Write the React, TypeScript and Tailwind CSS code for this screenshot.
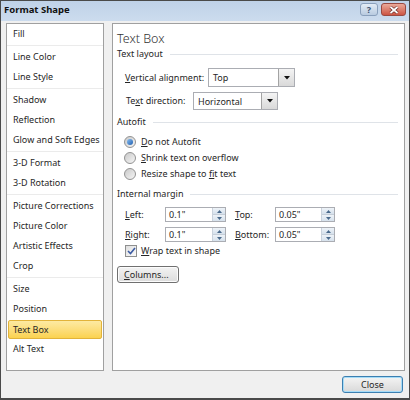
import React from "react";

const groups: string[][] = [
  ["Fill"],
  ["Line Color", "Line Style"],
  ["Shadow", "Reflection", "Glow and Soft Edges"],
  ["3-D Format", "3-D Rotation"],
  ["Picture Corrections", "Picture Color", "Artistic Effects", "Crop"],
  ["Size", "Position", "Text Box", "Alt Text"],
];

function U({ children }: { children: React.ReactNode }) {
  return <span className="underline underline-offset-[1px]">{children}</span>;
}

function GroupLabel({ text }: { text: string }) {
  return (
    <div className="h-[14px] flex items-center">
      <span className="leading-[14px]">{text}</span>
      <div className="flex-1 h-px bg-[#dfe3e8] ml-[7px] mr-[6px]" />
    </div>
  );
}

function Combo({ value, w }: { value: string; w: string }) {
  return (
    <div className={`${w} h-full border border-[#abadb3] bg-white flex`}>
      <div className="flex-1 pl-[4px] flex items-center leading-none">{value}</div>
      <div className="w-[16px] h-full border-l border-[#a3a3a3] bg-gradient-to-b from-[#f4f4f4] to-[#d9d9d9] flex items-center justify-center">
        <svg width="6" height="4" viewBox="0 0 6 4">
          <path d="M0 0 H6 L3 3.5 Z" fill="#111" />
        </svg>
      </div>
    </div>
  );
}

function Spinner({ value, w }: { value: string; w: string }) {
  return (
    <div className={`${w} h-full border border-[#abadb3] bg-white flex`}>
      <div className="flex-1 pl-[3px] flex items-center leading-none">{value}</div>
      <div className="w-[13px] h-full flex flex-col border-l border-[#c9d2dc]">
        <div className="flex-1 bg-gradient-to-b from-[#eef3f8] to-[#d6e1ec] border-b border-[#c5ced8] flex items-center justify-center">
          <svg width="5" height="3" viewBox="0 0 5 3">
            <path d="M0 3 H5 L2.5 0 Z" fill="#4a6a8c" />
          </svg>
        </div>
        <div className="flex-1 bg-gradient-to-b from-[#eef3f8] to-[#d6e1ec] flex items-center justify-center">
          <svg width="5" height="3" viewBox="0 0 5 3">
            <path d="M0 0 H5 L2.5 3 Z" fill="#4a6a8c" />
          </svg>
        </div>
      </div>
    </div>
  );
}

function Radio({ checked }: { checked?: boolean }) {
  return (
    <div className="w-[12px] h-[12px] rounded-full border border-[#929292] bg-gradient-to-br from-[#c9c9c9] to-[#f6f6f6] flex items-center justify-center">
      {checked && (
        <div className="w-[6px] h-[6px] rounded-full bg-gradient-to-br from-[#8cc0f0] to-[#1d5fb0]" />
      )}
    </div>
  );
}

export default function App() {
  return (
    <div className="w-[410px] h-[400px] border-t border-l border-r border-b-2 border-[#4a4a4a] bg-[#f0f0f0] flex flex-col font-['Segoe_UI','Noto_Sans',sans-serif] text-[9px] text-[#262626] overflow-hidden">
      {/* Title bar */}
      <div className="h-[20px] bg-gradient-to-b from-[#bfd2e8] to-[#ccdcee] flex items-start justify-between pl-[3px] pr-[3px]">
        <div className="h-[19px] flex items-center font-bold text-[9.5px] text-[#111]">Format Shape</div>
        <div className="flex gap-[3px] pt-[2px]">
          <div className="w-[18px] h-[13px] rounded-[3px] border border-[#8aa0bc] bg-gradient-to-b from-[#e3ecf6] to-[#b9cbe0] flex items-center justify-center text-[9px] font-bold text-[#3f5573] leading-none">
            ?
          </div>
          <div className="w-[25px] h-[13px] rounded-[3px] border border-[#9a4a42] bg-gradient-to-b from-[#eaa99a] to-[#cc5444] flex items-center justify-center">
            <svg width="10" height="8" viewBox="0 0 10 8">
              <path d="M1.5 1 L8.5 7 M8.5 1 L1.5 7" stroke="#5a2020" strokeWidth="3" />
              <path d="M1.5 1 L8.5 7 M8.5 1 L1.5 7" stroke="#fff" strokeWidth="1.8" />
            </svg>
          </div>
        </div>
      </div>

      {/* Body */}
      <div className="flex pt-[2px] pl-[5px] pr-[4px] gap-[8px]">
        {/* Left list */}
        <div className="w-[98px] h-[348px] border border-[#a0a0a0] bg-white flex flex-col">
          {groups.map((g, gi) => (
            <React.Fragment key={gi}>
              {gi > 0 && (
                <div className="h-[3px] flex items-center">
                  <div className="w-full h-px bg-[#ebebeb]" />
                </div>
              )}
              {g.map((item) =>
                item === "Text Box" ? (
                  <div key={item} className="h-[20px] px-px pt-px">
                    <div className="h-[19px] rounded-[2px] border border-[#e2b33a] bg-gradient-to-b from-[#fdeaa2] to-[#fbd24e] pl-[4px] flex items-center">
                      {item}
                    </div>
                  </div>
                ) : (
                  <div key={item} className="h-[20px] pl-[6px] flex items-center">
                    {item}
                  </div>
                )
              )}
            </React.Fragment>
          ))}
        </div>

        {/* Right panel */}
        <div className="flex-1 h-[348px] border border-[#a0a0a0] bg-white flex flex-col pl-[4px]">
          <div className="mt-[7px] h-[16px] leading-[16px] text-[12.5px] font-light text-[#333]">Text Box</div>
          <GroupLabel text="Text layout" />
          <div className="mt-[7px] h-[19px] flex items-center pl-[8px]">
            <div className="w-[83px]">
              <U>V</U>ertical alignment:
            </div>
            <Combo value="Top" w="w-[87px]" />
          </div>
          <div className="mt-[5px] h-[18px] flex items-center pl-[9px]">
            <div className="w-[67px]">
              Te<U>x</U>t direction:
            </div>
            <Combo value="Horizontal" w="w-[85px]" />
          </div>
          <div className="mt-[5px]">
            <GroupLabel text="Autofit" />
          </div>
          <div className="mt-[5px] flex flex-col">
            <div className="h-[16px] flex items-center pl-[7px]">
              <Radio checked />
              <span className="ml-[5px]">
                <U>D</U>o not Autofit
              </span>
            </div>
            <div className="h-[16px] flex items-center pl-[7px]">
              <Radio />
              <span className="ml-[5px]">
                <U>S</U>hrink text on overflow
              </span>
            </div>
            <div className="h-[16px] flex items-center pl-[7px]">
              <Radio />
              <span className="ml-[5px]">
                Resize shape to <U>f</U>it text
              </span>
            </div>
          </div>
          <div className="mt-[5px]">
            <GroupLabel text="Internal margin" />
          </div>
          <div className="mt-[6px] h-[15px] flex items-center pl-[8px]">
            <div className="w-[40px]">
              <U>L</U>eft:
            </div>
            <Spinner value={'0.1"'} w="w-[61px]" />
            <div className="w-[40px] ml-[9px]">
              <U>T</U>op:
            </div>
            <Spinner value={'0.05"'} w="w-[60px]" />
          </div>
          <div className="mt-[5px] h-[15px] flex items-center pl-[8px]">
            <div className="w-[40px]">
              <U>R</U>ight:
            </div>
            <Spinner value={'0.1"'} w="w-[61px]" />
            <div className="w-[40px] ml-[9px]">
              <U>B</U>ottom:
            </div>
            <Spinner value={'0.05"'} w="w-[60px]" />
          </div>
          <div className="mt-[2px] h-[14px] flex items-center pl-[8px]">
            <div className="w-[12px] h-[12px] border border-[#8e8f8f] bg-gradient-to-br from-[#dedede] to-[#fbfbfb] flex items-center justify-center">
              <svg width="9" height="8" viewBox="0 0 9 8">
                <path d="M1 4 L3.5 6.5 L8 1" stroke="#3b5ba3" strokeWidth="1.6" fill="none" />
              </svg>
            </div>
            <span className="ml-[4px]">
              <U>W</U>rap text in shape
            </span>
          </div>
          <div className="mt-[8px] w-[62px] h-[17px] rounded-[3px] border border-[#707070] bg-gradient-to-b from-[#f3f3f3] to-[#dcdcdc] shadow-[inset_0_0_0_1px_#fcfcfc] flex items-center pl-[6px]">
            <span>
              <U>C</U>olumns...
            </span>
          </div>
        </div>
      </div>

      {/* Footer */}
      <div className="flex justify-end pr-[6px] mt-[5px]">
        <div className="w-[61px] h-[17px] rounded-[3px] border border-[#3c7fb1] bg-gradient-to-b from-[#f4f4f4] to-[#d9d9d9] shadow-[inset_0_0_0_1px_#a6dcf7] flex items-center justify-center">
          Close
        </div>
      </div>
    </div>
  );
}
